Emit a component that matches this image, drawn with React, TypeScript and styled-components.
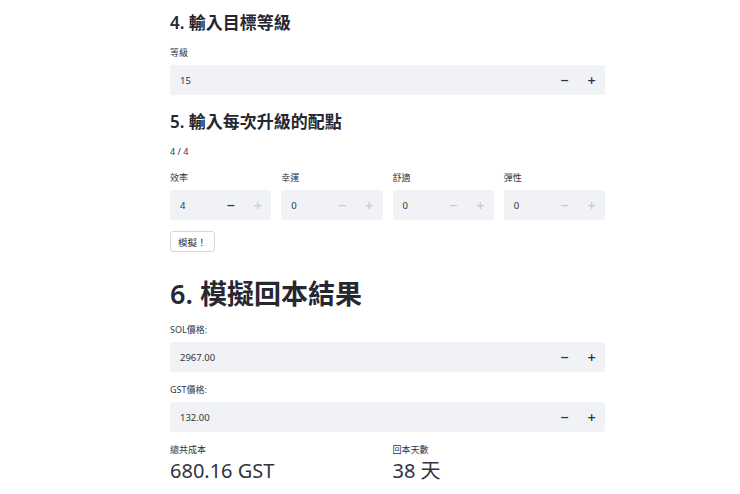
import React from 'react';
import styled, { createGlobalStyle } from 'styled-components';

const GlobalStyle = createGlobalStyle`
  html, body {
    margin: 0;
    padding: 0;
    background: #fff;
  }
  body {
    font-family: "Noto Sans", "Noto Sans CJK TC", sans-serif;
    color: #31333f;
  }
`;

const Page = styled.div`
  width: 435px;
  margin-left: 170px;
  padding-top: 12px;
  display: flex;
  flex-direction: column;
`;

const Heading = styled.h2<{ $big?: boolean; $top?: number }>`
  margin: ${(p) => `${p.$top ?? 0}px 0 13px`};
  font-size: ${(p) => (p.$big ? '27px' : '17px')};
  font-weight: 600;
  line-height: 1.3;
  color: #262730;
`;

const Label = styled.div`
  font-size: 9px;
  line-height: 12px;
  color: #31333f;
  margin-bottom: 6px;
`;

const Field = styled.div`
  display: flex;
  flex-direction: column;
  margin-bottom: 12px;
`;

const InputBox = styled.div`
  display: flex;
  align-items: center;
  height: 30px;
  background: #f0f2f6;
  border-radius: 3px;
`;

const Value = styled.div`
  flex: 1;
  padding-left: 10px;
  font-size: 9.5px;
  color: #31333f;
`;

const Step = styled.div<{ $off?: boolean }>`
  width: 27px;
  height: 100%;
  display: flex;
  align-items: center;
  justify-content: center;
  font-size: 11px;
  font-weight: 600;
  color: ${(p) => (p.$off ? '#c9cbd2' : '#31333f')};
  font-family: "DejaVu Sans", sans-serif;
`;

const Ratio = styled.div`
  font-size: 9px;
  line-height: 12px;
  color: #31333f;
  margin-bottom: 14px;
`;

const Grid = styled.div`
  display: grid;
  grid-template-columns: repeat(4, 1fr);
  gap: 10px;
`;

const Button = styled.button`
  align-self: flex-start;
  height: 21px;
  padding: 0 7px;
  margin-top: -1px;
  background: #fff;
  border: 1px solid #d5d7dc;
  border-radius: 3px;
  font-family: "Noto Sans", "Noto Sans CJK TC", sans-serif;
  font-size: 9.5px;
  color: #31333f;
`;

const Metrics = styled.div`
  display: grid;
  grid-template-columns: 1fr 1fr;
  gap: 10px;
`;

const MetricLabel = styled.div`
  font-size: 9px;
  line-height: 12px;
  color: #31333f;
  margin-bottom: 1px;
`;

const MetricValue = styled.div`
  font-size: 20px;
  line-height: 28px;
  color: #31333f;
`;

type NumProps = { label: string; value: string; minusOff?: boolean; plusOff?: boolean };

const NumberInput = ({ label, value, minusOff, plusOff }: NumProps) => (
  <Field>
    <Label>{label}</Label>
    <InputBox>
      <Value>{value}</Value>
      <Step $off={minusOff}>−</Step>
      <Step $off={plusOff}>+</Step>
    </InputBox>
  </Field>
);

const App = () => (
  <>
    <GlobalStyle />
    <Page>
      <Heading>4. 輸入目標等級</Heading>
      <NumberInput label="等級" value="15" />
      <Heading $top={4}>5. 輸入每次升級的配點</Heading>
      <Ratio>4 / 4</Ratio>
      <Grid>
        <NumberInput label="效率" value="4" plusOff />
        <NumberInput label="幸運" value="0" minusOff plusOff />
        <NumberInput label="舒適" value="0" minusOff plusOff />
        <NumberInput label="彈性" value="0" minusOff plusOff />
      </Grid>
      <Button>模擬！</Button>
      <Heading $big $top={24}>6. 模擬回本結果</Heading>
      <NumberInput label="SOL價格:" value="2967.00" />
      <NumberInput label="GST價格:" value="132.00" />
      <Metrics>
        <div>
          <MetricLabel>總共成本</MetricLabel>
          <MetricValue>680.16 GST</MetricValue>
        </div>
        <div>
          <MetricLabel>回本天數</MetricLabel>
          <MetricValue>38 天</MetricValue>
        </div>
      </Metrics>
    </Page>
  </>
);

export default App;
